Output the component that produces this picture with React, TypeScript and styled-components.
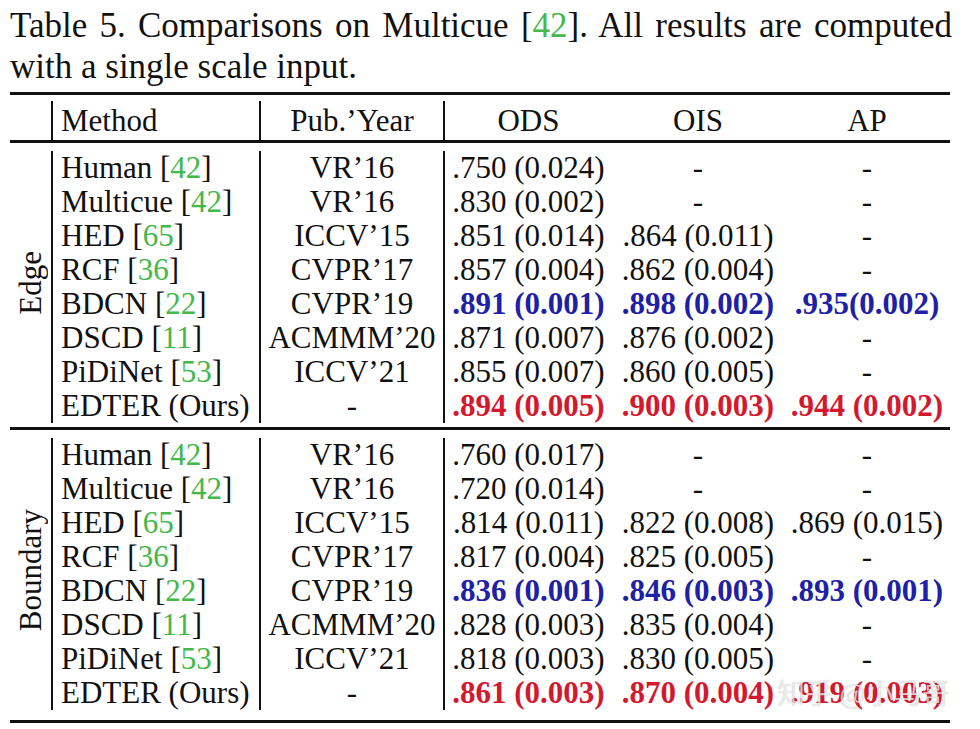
import React from 'react'
import styled, { createGlobalStyle } from 'styled-components'

const GlobalStyle = createGlobalStyle`
    html, body {
        margin:0;
        padding:0;
        background:#fff;
    }
    body {
        font-family:"Liberation Serif", "Times New Roman", serif;
        color:#111;
    }
`

const Page = styled.div`
    position:relative;
    width:980px;
    height:729px;
    padding-top:5px;
    box-sizing:border-box;
    overflow:hidden;
`
const Caption = styled.div`
    width:942px;
    font-size:35px;
    line-height:41px;
    padding-left:10px;
    margin-bottom:5px;
`
const CaptionLine = styled.div<{ $justify?: boolean }>`
    white-space:nowrap;
    text-align:${p => (p.$justify ? 'justify' : 'left')};
    text-align-last:${p => (p.$justify ? 'justify' : 'left')};
`
const Ref = styled.span`
    color:#44b84a;
`
const Table = styled.table`
    border-collapse:collapse;
    table-layout:fixed;
    width:940px;
    margin-left:10px;
    font-size:31px;
`
const Head = styled.thead`
    border-top:3px solid #111;
    border-bottom:3px solid #111;
`
const Section = styled.tbody`
    border-bottom:3px solid #111;
`
const Spacer = styled.td<{ $h: number }>`
    height:${p => p.$h}px;
    padding:0;
`
const Cell = styled.td<{ $line?: boolean; $align?: string; $h?: number }>`
    height:${p => p.$h || 34}px;
    line-height:${p => p.$h || 34}px;
    padding:0 0 0 ${p => (p.$align === 'left' ? 8 : 0)}px;
    text-align:${p => p.$align || 'center'};
    border-left:${p => (p.$line ? '2px solid #111' : 'none')};
    white-space:nowrap;
`
const Side = styled.td`
    padding:0;
    text-align:center;
    vertical-align:middle;
`
const SideLabel = styled.div`
    display:inline-block;
    writing-mode:vertical-rl;
    transform:rotate(180deg);
    line-height:1;
`
const Val = styled.span<{ $tone?: 'best' | 'second' }>`
    font-weight:${p => (p.$tone ? 700 : 400)};
    color:${p => (p.$tone === 'best' ? '#d4182e' : p.$tone === 'second' ? '#1c21a8' : '#111')};
`
const Watermark = styled.div`
    position:absolute;
    left:777px;
    top:674px;
    font-family:"Noto Sans CJK SC", sans-serif;
    font-size:28px;
    line-height:36px;
    color:rgba(255,255,255,0.72);
    text-shadow:0 0 1px rgba(0,0,0,0.3);
    white-space:nowrap;
`

type Row = {
    name: string
    refNo?: string
    pub: string
    ods: string
    ois: string
    ap: string
    tone?: 'best' | 'second'
}

const edgeRows: Row[] = [
    { name: 'Human', refNo: '42', pub: 'VR’16', ods: '.750 (0.024)', ois: '-', ap: '-' },
    { name: 'Multicue', refNo: '42', pub: 'VR’16', ods: '.830 (0.002)', ois: '-', ap: '-' },
    { name: 'HED', refNo: '65', pub: 'ICCV’15', ods: '.851 (0.014)', ois: '.864 (0.011)', ap: '-' },
    { name: 'RCF', refNo: '36', pub: 'CVPR’17', ods: '.857 (0.004)', ois: '.862 (0.004)', ap: '-' },
    { name: 'BDCN', refNo: '22', pub: 'CVPR’19', ods: '.891 (0.001)', ois: '.898 (0.002)', ap: '.935(0.002)', tone: 'second' },
    { name: 'DSCD', refNo: '11', pub: 'ACMMM’20', ods: '.871 (0.007)', ois: '.876 (0.002)', ap: '-' },
    { name: 'PiDiNet', refNo: '53', pub: 'ICCV’21', ods: '.855 (0.007)', ois: '.860 (0.005)', ap: '-' },
    { name: 'EDTER (Ours)', pub: '-', ods: '.894 (0.005)', ois: '.900 (0.003)', ap: '.944 (0.002)', tone: 'best' },
]

const boundaryRows: Row[] = [
    { name: 'Human', refNo: '42', pub: 'VR’16', ods: '.760 (0.017)', ois: '-', ap: '-' },
    { name: 'Multicue', refNo: '42', pub: 'VR’16', ods: '.720 (0.014)', ois: '-', ap: '-' },
    { name: 'HED', refNo: '65', pub: 'ICCV’15', ods: '.814 (0.011)', ois: '.822 (0.008)', ap: '.869 (0.015)' },
    { name: 'RCF', refNo: '36', pub: 'CVPR’17', ods: '.817 (0.004)', ois: '.825 (0.005)', ap: '-' },
    { name: 'BDCN', refNo: '22', pub: 'CVPR’19', ods: '.836 (0.001)', ois: '.846 (0.003)', ap: '.893 (0.001)', tone: 'second' },
    { name: 'DSCD', refNo: '11', pub: 'ACMMM’20', ods: '.828 (0.003)', ois: '.835 (0.004)', ap: '-' },
    { name: 'PiDiNet', refNo: '53', pub: 'ICCV’21', ods: '.818 (0.003)', ois: '.830 (0.005)', ap: '-' },
    { name: 'EDTER (Ours)', pub: '-', ods: '.861 (0.003)', ois: '.870 (0.004)', ap: '.919 (0.003)', tone: 'best' },
]

const Block = ({ label, rows, tail }: { label: string; rows: Row[]; tail: number }) => (
    <Section>
        <tr>
            <Spacer $h={8} colSpan={6} />
        </tr>
        {rows.map((r, i) => (
            <tr key={i}>
                {i === 0 && (
                    <Side rowSpan={rows.length}>
                        <SideLabel>{label}</SideLabel>
                    </Side>
                )}
                <Cell $line $align="left">
                    {r.name}
                    {r.refNo && (
                        <>
                            {' '}[<Ref>{r.refNo}</Ref>]
                        </>
                    )}
                </Cell>
                <Cell $line>{r.pub}</Cell>
                <Cell $line>
                    <Val $tone={r.tone}>{r.ods}</Val>
                </Cell>
                <Cell>
                    <Val $tone={r.ois === '-' ? undefined : r.tone}>{r.ois}</Val>
                </Cell>
                <Cell>
                    <Val $tone={r.ap === '-' ? undefined : r.tone}>{r.ap}</Val>
                </Cell>
            </tr>
        ))}
        <tr>
            <Spacer $h={tail} colSpan={6} />
        </tr>
    </Section>
)

const App = () => {
    return (
        <Page>
            <GlobalStyle />
            <Caption>
                <CaptionLine $justify>
                    Table 5. Comparisons on Multicue [<Ref>42</Ref>]. All results are computed
                </CaptionLine>
                <CaptionLine>with a single scale input.</CaptionLine>
            </Caption>
            <Table>
                <colgroup>
                    <col style={{ width: '42px' }} />
                    <col style={{ width: '208px' }} />
                    <col style={{ width: '184px' }} />
                    <col style={{ width: '168px' }} />
                    <col style={{ width: '172px' }} />
                    <col style={{ width: '166px' }} />
                </colgroup>
                <Head>
                    <tr>
                        <Spacer $h={6} colSpan={6} />
                    </tr>
                    <tr>
                        <Cell $h={39} />
                        <Cell $h={39} $line $align="left">Method</Cell>
                        <Cell $h={39} $line>Pub.’Year</Cell>
                        <Cell $h={39} $line>ODS</Cell>
                        <Cell $h={39}>OIS</Cell>
                        <Cell $h={39}>AP</Cell>
                    </tr>
                </Head>
                <Block label="Edge" rows={edgeRows} tail={4} />
                <Block label="Boundary" rows={boundaryRows} tail={10} />
            </Table>
            <Watermark>知乎 @小马哥</Watermark>
        </Page>
    )
}

export default App
